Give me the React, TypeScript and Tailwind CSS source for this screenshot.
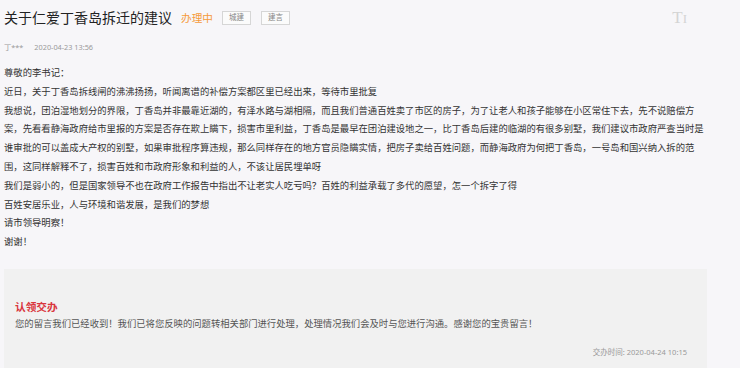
import React from "react";

const FONT = '"Microsoft YaHei", "Noto Sans", "Noto Sans CJK SC", sans-serif';

export default function App() {
  return (
    <div
      className="w-[740px] h-[368px] overflow-hidden bg-[#f7f6f9] text-[#333]"
      style={{ fontFamily: FONT }}
    >
      <div className="flex items-center h-[22px] mt-[7px] pl-[4px]">
        <span className="text-[14px] leading-none text-[#222]">关于仁爱丁香岛拆迁的建议</span>
        <span className="ml-[9px] text-[10.67px] leading-none text-[#f59a3c]">办理中</span>
        <span className="ml-[9px] flex items-center justify-center w-[29px] h-[14px] border border-[#d6d6d6] bg-[#fbfbfb] text-[7.5px] text-[#888] leading-none">
          城建
        </span>
        <span className="ml-[10px] flex items-center justify-center w-[29px] h-[14px] border border-[#d6d6d6] bg-[#fbfbfb] text-[7.5px] text-[#888] leading-none">
          建言
        </span>
        <span
          className="ml-auto mr-[53px] mb-[2px] text-[17px] leading-none text-[#d4d4d4]"
          style={{ fontFamily: '"Liberation Serif", serif' }}
        >
          T<span className="text-[13px]">I</span>
        </span>
      </div>
      <div className="flex items-center h-[12px] mt-[13px] pl-[4px] text-[7.3px] text-[#999] leading-none">
        <span>丁***</span>
        <span className="ml-[11px]">2020-04-23 13:56</span>
      </div>
      <div className="mt-[10px] pl-[4px] w-[710px] text-[9.33px] leading-[18.8px] text-[#333]">
        <p>尊敬的李书记：</p>
        <p>近日，关于丁香岛拆线闸的沸沸扬扬，听闻离谱的补偿方案都区里已经出来，等待市里批复</p>
        <p>
          我想说，团泊湿地划分的界限，丁香岛并非最靠近湖的，有泽水路与湖相隔，而且我们普通百姓卖了市区的房子，为了让老人和孩子能够在小区常住下去，先不说赔偿方案，先看看静海政府给市里报的方案是否存在欺上瞒下，损害市里利益，丁香岛是最早在团泊建设地之一，比丁香岛后建的临湖的有很多别墅，我们建议市政府严查当时是谁审批的可以盖成大产权的别墅，如果审批程序算违规，那么同样存在的地方官员隐瞒实情，把房子卖给百姓问题，而静海政府为何把丁香岛，一号岛和国兴纳入拆的范围，这同样解释不了，损害百姓和市政府形象和利益的人，不该让居民埋单呀
        </p>
        <p>我们是弱小的，但是国家领导不也在政府工作报告中指出不让老实人吃亏吗？百姓的利益承载了多代的愿望，怎一个拆字了得</p>
        <p>百姓安居乐业，人与环境和谐发展，是我们的梦想</p>
        <p>请市领导明察！</p>
        <p>谢谢！</p>
      </div>
      <div className="mt-[17px] ml-[4px] w-[703px] h-[120px] bg-[#f1f1f1] pt-[31px] pl-[11px] pr-[20px]">
        <div className="text-[10.67px] leading-[14px] font-bold text-[#d9363e]">认领交办</div>
        <div className="mt-[3px] text-[9.33px] leading-[14px] text-[#555]">
          您的留言我们已经收到！我们已将您反映的问题转相关部门进行处理，处理情况我们会及时与您进行沟通。感谢您的宝贵留言！
        </div>
        <div className="mt-[16px] text-right text-[7.5px] leading-[10px] text-[#999]">交办时间: 2020-04-24 10:15</div>
      </div>
    </div>
  );
}
